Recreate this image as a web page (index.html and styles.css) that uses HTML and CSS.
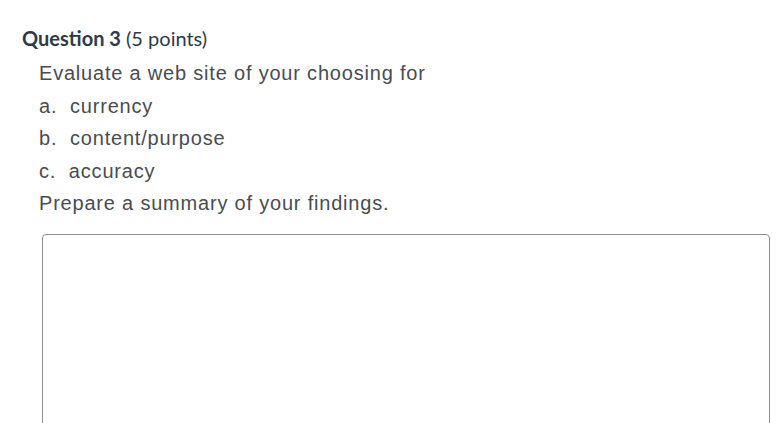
FILE: index.html
```html
<!DOCTYPE html>
<html lang="en">
<head>
    <meta charset="UTF-8">
    <title>Question 3</title>
    <link rel="stylesheet" href="styles.css">
</head>
<body>

<div class="question">
    <div class="question-header">
        <span class="question-name">Question 3</span> <span class="question-points">(5 points)</span>
    </div>

    <div class="question-text">
        <p>Evaluate a web site of your choosing for</p>
        <p>a.&nbsp; currency</p>
        <p>b.&nbsp; content/purpose</p>
        <p>c.&nbsp; accuracy</p>
        <p>Prepare a summary of your findings.</p>
    </div>

    <div class="answer">
        <textarea class="answer-box" aria-label="Answer"></textarea>
    </div>
</div>

</body>
</html>
```

FILE: styles.css
```css
body {
    margin: 0;
    background-color: #fff;
    overflow: hidden;
}

.question {
    padding: 26px 6px 0 22px;
}

.question-header {
    font-family: Lato, "Open Sans", sans-serif;
    font-size: 20px;
    color: #2d3b45;
    line-height: 24px;
}

.question-name {
    font-weight: bold;
}

.question-text {
    padding-left: 17px;
    margin-top: 7px;
    font-family: "Liberation Sans", Arial, sans-serif;
    font-size: 20px;
    letter-spacing: 0.8px;
    color: #494c50;
}

.question-text p {
    margin: 0;
    line-height: 32.5px;
}

.answer {
    padding: 14px 0 0 20px;
}

.answer-box {
    display: block;
    box-sizing: border-box;
    width: 728px;
    height: 260px;
    margin: 0;
    border: 1px solid #8c9094;
    border-radius: 4px;
    resize: none;
    background: #fff;
}
```
